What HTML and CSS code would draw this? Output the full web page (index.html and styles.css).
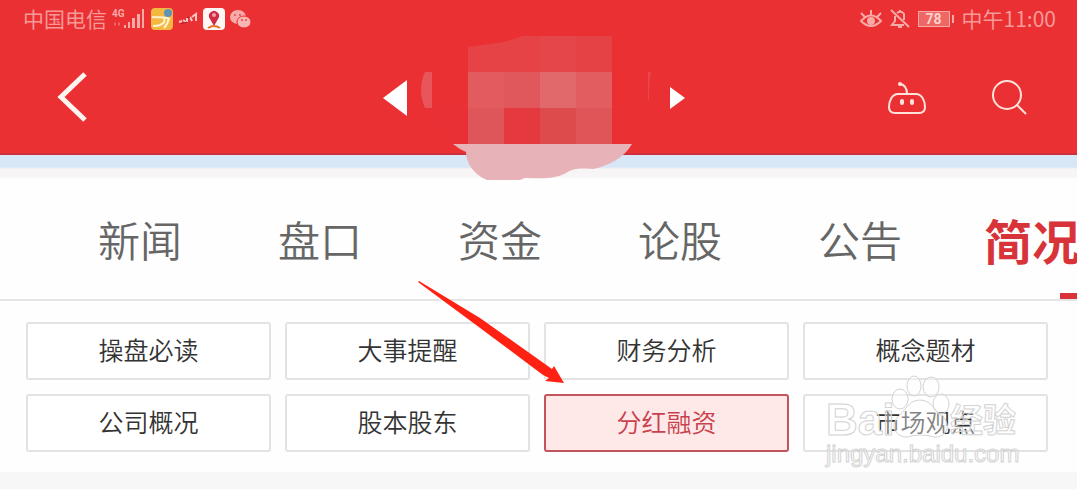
FILE: index.html
```html
<!DOCTYPE html>
<html lang="zh-CN">
<head>
<meta charset="utf-8">
<meta name="viewport" content="width=device-width, initial-scale=1">
<title>简况</title>
<link rel="stylesheet" href="styles.css">
</head>
<body>
<header class="top">
  <div class="status">
    <div class="status-side">
      <span class="carrier">中国电信</span>
      <svg class="signal" width="34" height="22" viewBox="0 0 34 22" aria-hidden="true">
        <text class="net" x="0" y="9">4G</text>
        <g fill="#f8a9a6"><rect x="12" y="17" width="2" height="3"/><rect x="16" y="14" width="2" height="6"/><rect x="20" y="10" width="3" height="10"/><rect x="25" y="6" width="3" height="14"/><rect x="30" y="1" width="2" height="19"/></g>
        <path d="M2 16h2M6 16h2" stroke="#ee6262" stroke-width="3"/>
      </svg>
      <svg width="22" height="22" viewBox="0 0 22 22" aria-hidden="true">
        <rect width="22" height="22" rx="4" fill="#f4b73f"/>
        <path d="M1 9c7 1 11-1 18 2M13 10c2 5-3 8-11 8M18 10c-1 5-3 8-5 10" fill="none" stroke="#fff3d0" stroke-width="2"/>
        <circle cx="17" cy="5" r="4" fill="#5e93b8"/>
      </svg>
      <svg class="wing" width="20" height="14" viewBox="0 0 20 14" aria-hidden="true">
        <path d="M1 10l3-1M5 8l3 2M9 6v4M12 5l2 4M14 5l4-3v7" fill="none" stroke="#fbc5c3" stroke-width="2"/><path d="M3 12l6-2M9 5l3 1" stroke="#a9222b" stroke-width="1"/>
      </svg>
      <svg width="22" height="22" viewBox="0 0 22 22" aria-hidden="true">
        <rect width="22" height="22" rx="4" fill="#fff7f5"/>
        <path d="M11 18L7 11a5 5 0 1 1 8 0z" fill="#d02c45"/><circle cx="11" cy="7" r="2" fill="#f3a0a8"/>
        <path d="M5 20q6-4 12 0" stroke="#e5762b" stroke-width="2" fill="none"/>
      </svg>
      <svg width="22" height="20" viewBox="0 0 22 20" aria-hidden="true">
        <ellipse cx="8" cy="8" rx="8" ry="7" fill="#f8aaa8"/><ellipse cx="14" cy="13" rx="7" ry="6" fill="#f9b5b2" stroke="#eb3034"/>
        <g fill="#e04a50"><circle cx="5" cy="6" r="1"/><circle cx="10" cy="6" r="1"/><circle cx="12" cy="11" r="1"/><circle cx="16" cy="11" r="1"/></g>
      </svg>
    </div>
    <div class="status-side status-right">
      <svg width="22" height="20" viewBox="0 0 22 20" fill="none" stroke="#f8aaa6" stroke-width="2" aria-hidden="true">
        <path d="M1 12Q11 1 21 12Q11 22 1 12zM1 4l4 4M11 1v5M21 4l-4 4"/><circle cx="11" cy="12" r="3" fill="#f8aaa6"/>
      </svg>
      <svg width="20" height="20" viewBox="0 0 20 20" fill="none" stroke="#f8aaa6" stroke-width="2" aria-hidden="true">
        <path d="M1 1l18 17M5 7v5l-3 4h12M7 4q4-3 7 1v6M10 1v2M8 18h4"/>
      </svg>
      <span class="battery">78</span>
      <span>中午11:00</span>
    </div>
  </div>
  <nav class="bar">
    <button class="icon-btn back" aria-label="返回"><svg width="32" height="52" viewBox="0 0 32 52"><path d="M29 2L5 25L29 48" fill="none" stroke="#fff5f0" stroke-width="5"/></svg></button>
    <div class="pager">
      <button class="icon-btn" aria-label="上一个"><svg width="24" height="36" viewBox="0 0 24 36"><path d="M24 0v36L0 18z" fill="#fff"/></svg></button>
      <button class="icon-btn" aria-label="下一个"><svg width="15" height="22" viewBox="0 0 15 22"><path d="M0 0v22L15 11z" fill="#fff"/></svg></button>
    </div>
    <div class="tools">
      <button class="icon-btn" aria-label="助手"><svg width="38" height="34" viewBox="0 0 38 34" fill="none" stroke="#ffe3da" stroke-width="2"><path d="M10 13H28C34 13 37 20 37 26Q37 32 31 32H7Q1 32 1 26C1 20 4 13 10 13zM19 13Q19 4 12 3"/><circle cx="12" cy="3" r="1"/><path d="M14 20v2M24 20v2" stroke-width="4" stroke-linecap="round"/></svg></button>
      <button class="icon-btn" aria-label="搜索"><svg width="36" height="36" viewBox="0 0 36 36" fill="none" stroke="#ffe3da" stroke-width="2"><circle cx="16" cy="15" r="14"/><path d="M26 25L35 34"/></svg></button>
    </div>
  </nav>
  <svg class="mosaic" width="240" height="146" viewBox="416 36 240 146" aria-hidden="true">
    <path d="M442 108h26v36h-15q-9-10-11-24-16-8-18-12z" fill="#e93135"/>
    <path d="M468 47L504 42L523 36H540V72H468z" fill="#e54345"/>
    <path d="M540 36h36v36h-36z" fill="#e54649"/><path d="M576 36h36v36h-36z" fill="#e54245"/>
    <path d="M432 72v36h-7q-8-18 0-36z" fill="#e8555a"/><path d="M648 72h3q-2 8-2 28h-1z" fill="#e8484b"/>
    <path d="M468 72h36v36h-36z" fill="#e25b5f"/><path d="M504 72h36v36h-36z" fill="#e0585c"/><path d="M540 72h36v36h-36z" fill="#e1696c"/><path d="M576 72h36v36h-36z" fill="#e15d60"/>
    <path d="M468 108h36v36h-36z" fill="#de565a"/><path d="M504 108h36v36h-36z" fill="#e4393e"/><path d="M540 108h36v36h-36z" fill="#dd4b4c"/><path d="M576 108h36v36h-36z" fill="#df5558"/>
    <path d="M453 144H632C624 158 608 166 593 169C580 168 574 168 566 173C553 180 540 178 525 178L520 180H487C474 175 466 163 466 152Q459 149 453 144z" fill="#e7b3b8"/>
  </svg>
</header>
<div class="band"></div>
<nav class="tabs">
  <a class="tab" href="#">新闻</a>
  <a class="tab" href="#">盘口</a>
  <a class="tab" href="#">资金</a>
  <a class="tab" href="#">论股</a>
  <a class="tab" href="#">公告</a>
  <a class="tab active" href="#" aria-current="page">简况</a>
</nav>
<main class="panel">
  <div class="grid">
    <button class="cell">操盘必读</button>
    <button class="cell">大事提醒</button>
    <button class="cell">财务分析</button>
    <button class="cell">概念题材</button>
    <button class="cell">公司概况</button>
    <button class="cell">股本股东</button>
    <button class="cell selected">分红融资</button>
    <button class="cell">市场观点</button>
  </div>
  <svg class="arrow" width="148" height="104" viewBox="418 280 148 104" aria-hidden="true"><path d="M419 281L480 318L552 369L554 366L564 383L545 381L549 378L543 375L472 322L418 282z" fill="#ff2112"/></svg>
  <svg class="watermark" width="200" height="104" viewBox="822 370 200 104" aria-hidden="true">
    <g fill="#fff" fill-opacity=".4" stroke="#d3d3d3" stroke-width="1">
      <text class="wm-logo" x="826" y="435">Bai</text>
      <ellipse cx="900" cy="399" rx="8" ry="10"/><ellipse cx="914" cy="386" rx="7" ry="10"/><ellipse cx="931" cy="387" rx="8" ry="10"/><ellipse cx="941" cy="404" rx="8" ry="10"/>
      <path d="M920 400C932 400 936 413 944 418C952 428 944 438 934 437Q920 433 907 437C896 437 890 427 897 418C905 412 908 400 920 400z"/>
      <text class="wm-cn" x="950" y="432">经验</text>
      <text class="wm-url" x="826" y="462">jingyan.baidu.com</text>
    </g>
  </svg>
</main>
<footer class="foot"></footer>
</body>
</html>
```
FILE: styles.css
```css
* { box-sizing: border-box; }
body {
  margin: 0;
  background: #fefefe;
  font-family: "Noto Sans CJK SC", sans-serif;
  overflow-x: hidden;
}
button { font: inherit; cursor: pointer; }
svg { display: block; }
.top {
  position: relative;
  background: #eb3034;
  border-bottom: 2px solid #cf2f3b;
}
.status {
  display: flex;
  justify-content: space-between;
  align-items: center;
  height: 38px;
  padding: 0 21px 0 23px;
  color: #f69a97;
  font-size: 21px;
  font-weight: 400;
  line-height: 30px;
}
.status-side { display: flex; align-items: center; gap: 5px; }
.status-side > span:not(.battery) { padding-bottom: 2px; }
.status-right { gap: 8px; }
.net { font: bold 10px Roboto, sans-serif; fill: #f8aaa6; }
.battery {
  position: relative;
  width: 32px;
  height: 16px;
  margin-right: 4px;
  border: 1px solid #f8aaa6;
  background: #ef6765;
  color: #ffd0cc;
  font: bold 14px/14px Roboto, sans-serif;
  text-align: center;
}
.battery::after {
  content: "";
  position: absolute;
  right: -5px;
  top: 3px;
  width: 2px;
  height: 8px;
  background: #f8aaa6;
}
.bar {
  display: grid;
  grid-template-columns: 1fr 302px 1fr;
  align-items: center;
  height: 115px;
  padding: 4px 50px 0 56px;
}
.icon-btn { padding: 0; border: 0; background: none; }
.back { justify-self: start; }
.pager { display: flex; justify-content: space-between; align-items: center; margin: 0 8px 0 -8px; }
.tools { display: flex; justify-content: flex-end; align-items: center; gap: 65px; }
.mosaic { position: absolute; left: calc(50% - 123px); top: 36px; }
.band { height: 23px; background: linear-gradient(#d8e7f6 0 12px, #f7f5f6 14px 100%); }
.tabs {
  display: flex;
  align-items: center;
  gap: 96px;
  height: 123px;
  padding: 0 0 0 98px;
  border-bottom: 2px solid #e5e5e5;
  overflow: hidden;
}
.tab {
  flex: none;
  position: relative;
  color: #666;
  font-size: 42px;
  font-weight: 350;
  line-height: 60px;
  text-decoration: none;
}
.active {
  margin-left: -14px;
  color: #d9333a;
  font-size: 48px;
  font-weight: 700;
  line-height: 56px;
}
.active::after {
  content: "";
  position: absolute;
  left: 76px;
  bottom: -32px;
  width: 48px;
  height: 6px;
  background: #d9333a;
}
.panel { position: relative; padding: 21px 29px 20px 26px; }
.grid { display: grid; grid-template-columns: repeat(4, 1fr); gap: 14px; }
.cell {
  height: 58px;
  padding: 0 0 4px;
  border: 2px solid #e3e3e3;
  border-radius: 3px;
  background: #fff;
  color: #333;
  font-size: 25px;
  font-weight: 350;
  line-height: 36px;
}
.selected { border-color: #c2545b; background: #ffe8e8; color: #c8414c; }
.arrow { position: absolute; left: calc(50% - 121px); top: -21px; }
.watermark { position: absolute; right: 55px; top: 69px; }
.wm-logo { font: bold 44px "Liberation Sans", sans-serif; }
.wm-cn { font: bold 33px "Noto Sans CJK SC", sans-serif; }
.wm-url { font: 24px "Liberation Sans", sans-serif; }
.foot { height: 17px; background: #f7f7f7; }
```
